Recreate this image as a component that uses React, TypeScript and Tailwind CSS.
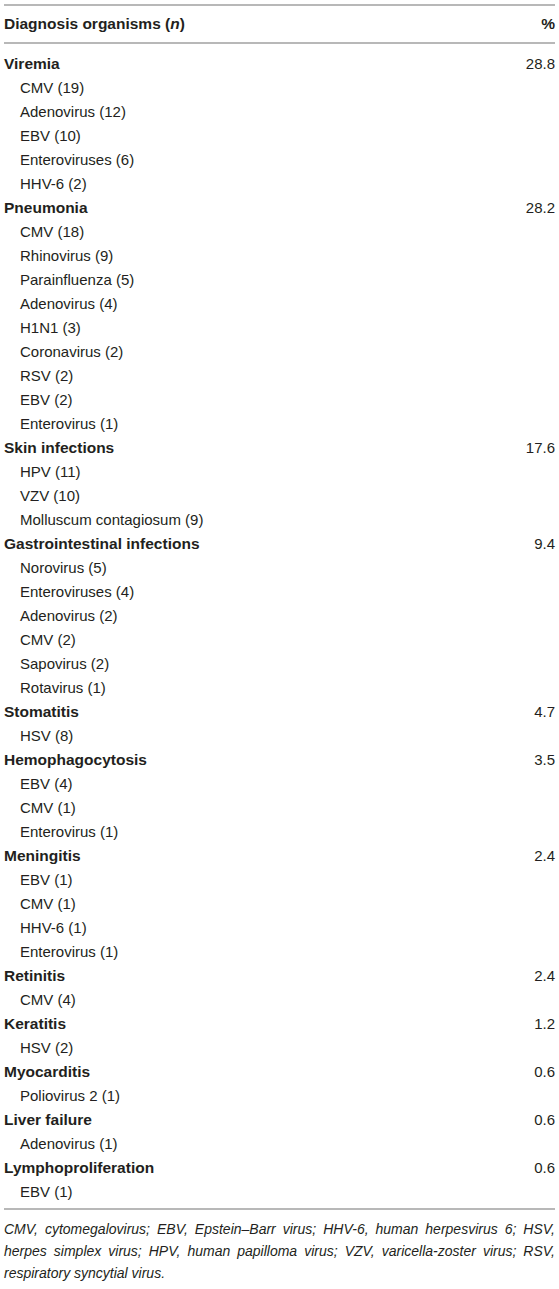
import React from "react";

type Group = { name: string; pct: string; items: string[] };

const groups: Group[] = [
  { name: "Viremia", pct: "28.8", items: ["CMV (19)", "Adenovirus (12)", "EBV (10)", "Enteroviruses (6)", "HHV-6 (2)"] },
  {
    name: "Pneumonia",
    pct: "28.2",
    items: ["CMV (18)", "Rhinovirus (9)", "Parainfluenza (5)", "Adenovirus (4)", "H1N1 (3)", "Coronavirus (2)", "RSV (2)", "EBV (2)", "Enterovirus (1)"],
  },
  { name: "Skin infections", pct: "17.6", items: ["HPV (11)", "VZV (10)", "Molluscum contagiosum (9)"] },
  {
    name: "Gastrointestinal infections",
    pct: "9.4",
    items: ["Norovirus (5)", "Enteroviruses (4)", "Adenovirus (2)", "CMV (2)", "Sapovirus (2)", "Rotavirus (1)"],
  },
  { name: "Stomatitis", pct: "4.7", items: ["HSV (8)"] },
  { name: "Hemophagocytosis", pct: "3.5", items: ["EBV (4)", "CMV (1)", "Enterovirus (1)"] },
  { name: "Meningitis", pct: "2.4", items: ["EBV (1)", "CMV (1)", "HHV-6 (1)", "Enterovirus (1)"] },
  { name: "Retinitis", pct: "2.4", items: ["CMV (4)"] },
  { name: "Keratitis", pct: "1.2", items: ["HSV (2)"] },
  { name: "Myocarditis", pct: "0.6", items: ["Poliovirus 2 (1)"] },
  { name: "Liver failure", pct: "0.6", items: ["Adenovirus (1)"] },
  { name: "Lymphoproliferation", pct: "0.6", items: ["EBV (1)"] },
];

export default function App() {
  return (
    <div
      className="w-[559px] h-[1289px] bg-white px-[4px] pt-[4px] text-[#231f20]"
      style={{ fontFamily: '"Liberation Sans", Arial, sans-serif' }}
    >
      <div className="flex items-center justify-between h-[40px] border-t-[2px] border-b-[2px] border-[#b8b8b8] text-[15.5px] leading-[20px]">
        <span className="font-bold">
          Diagnosis organisms (<i>n</i>)
        </span>
        <span className="font-bold">%</span>
      </div>
      <div className="pt-[8px] pb-[4px] border-b-[2px] border-[#b8b8b8] text-[15px]">
        {groups.map((g) => (
          <div key={g.name}>
            <div className="flex justify-between h-[24px] items-center">
              <span className="font-bold text-[15.5px]">{g.name}</span>
              <span>{g.pct}</span>
            </div>
            {g.items.map((it, i) => (
              <div key={i} className="h-[24px] flex items-center pl-[16px]">
                {it}
              </div>
            ))}
          </div>
        ))}
      </div>
      <p className="pt-[8px] text-[14px] leading-[22px] italic text-justify text-[#231f20]">
        CMV, cytomegalovirus; EBV, Epstein–Barr virus; HHV-6, human herpesvirus 6; HSV, herpes simplex virus; HPV, human
        papilloma virus; VZV, varicella-zoster virus; RSV, respiratory syncytial virus.
      </p>
    </div>
  );
}
